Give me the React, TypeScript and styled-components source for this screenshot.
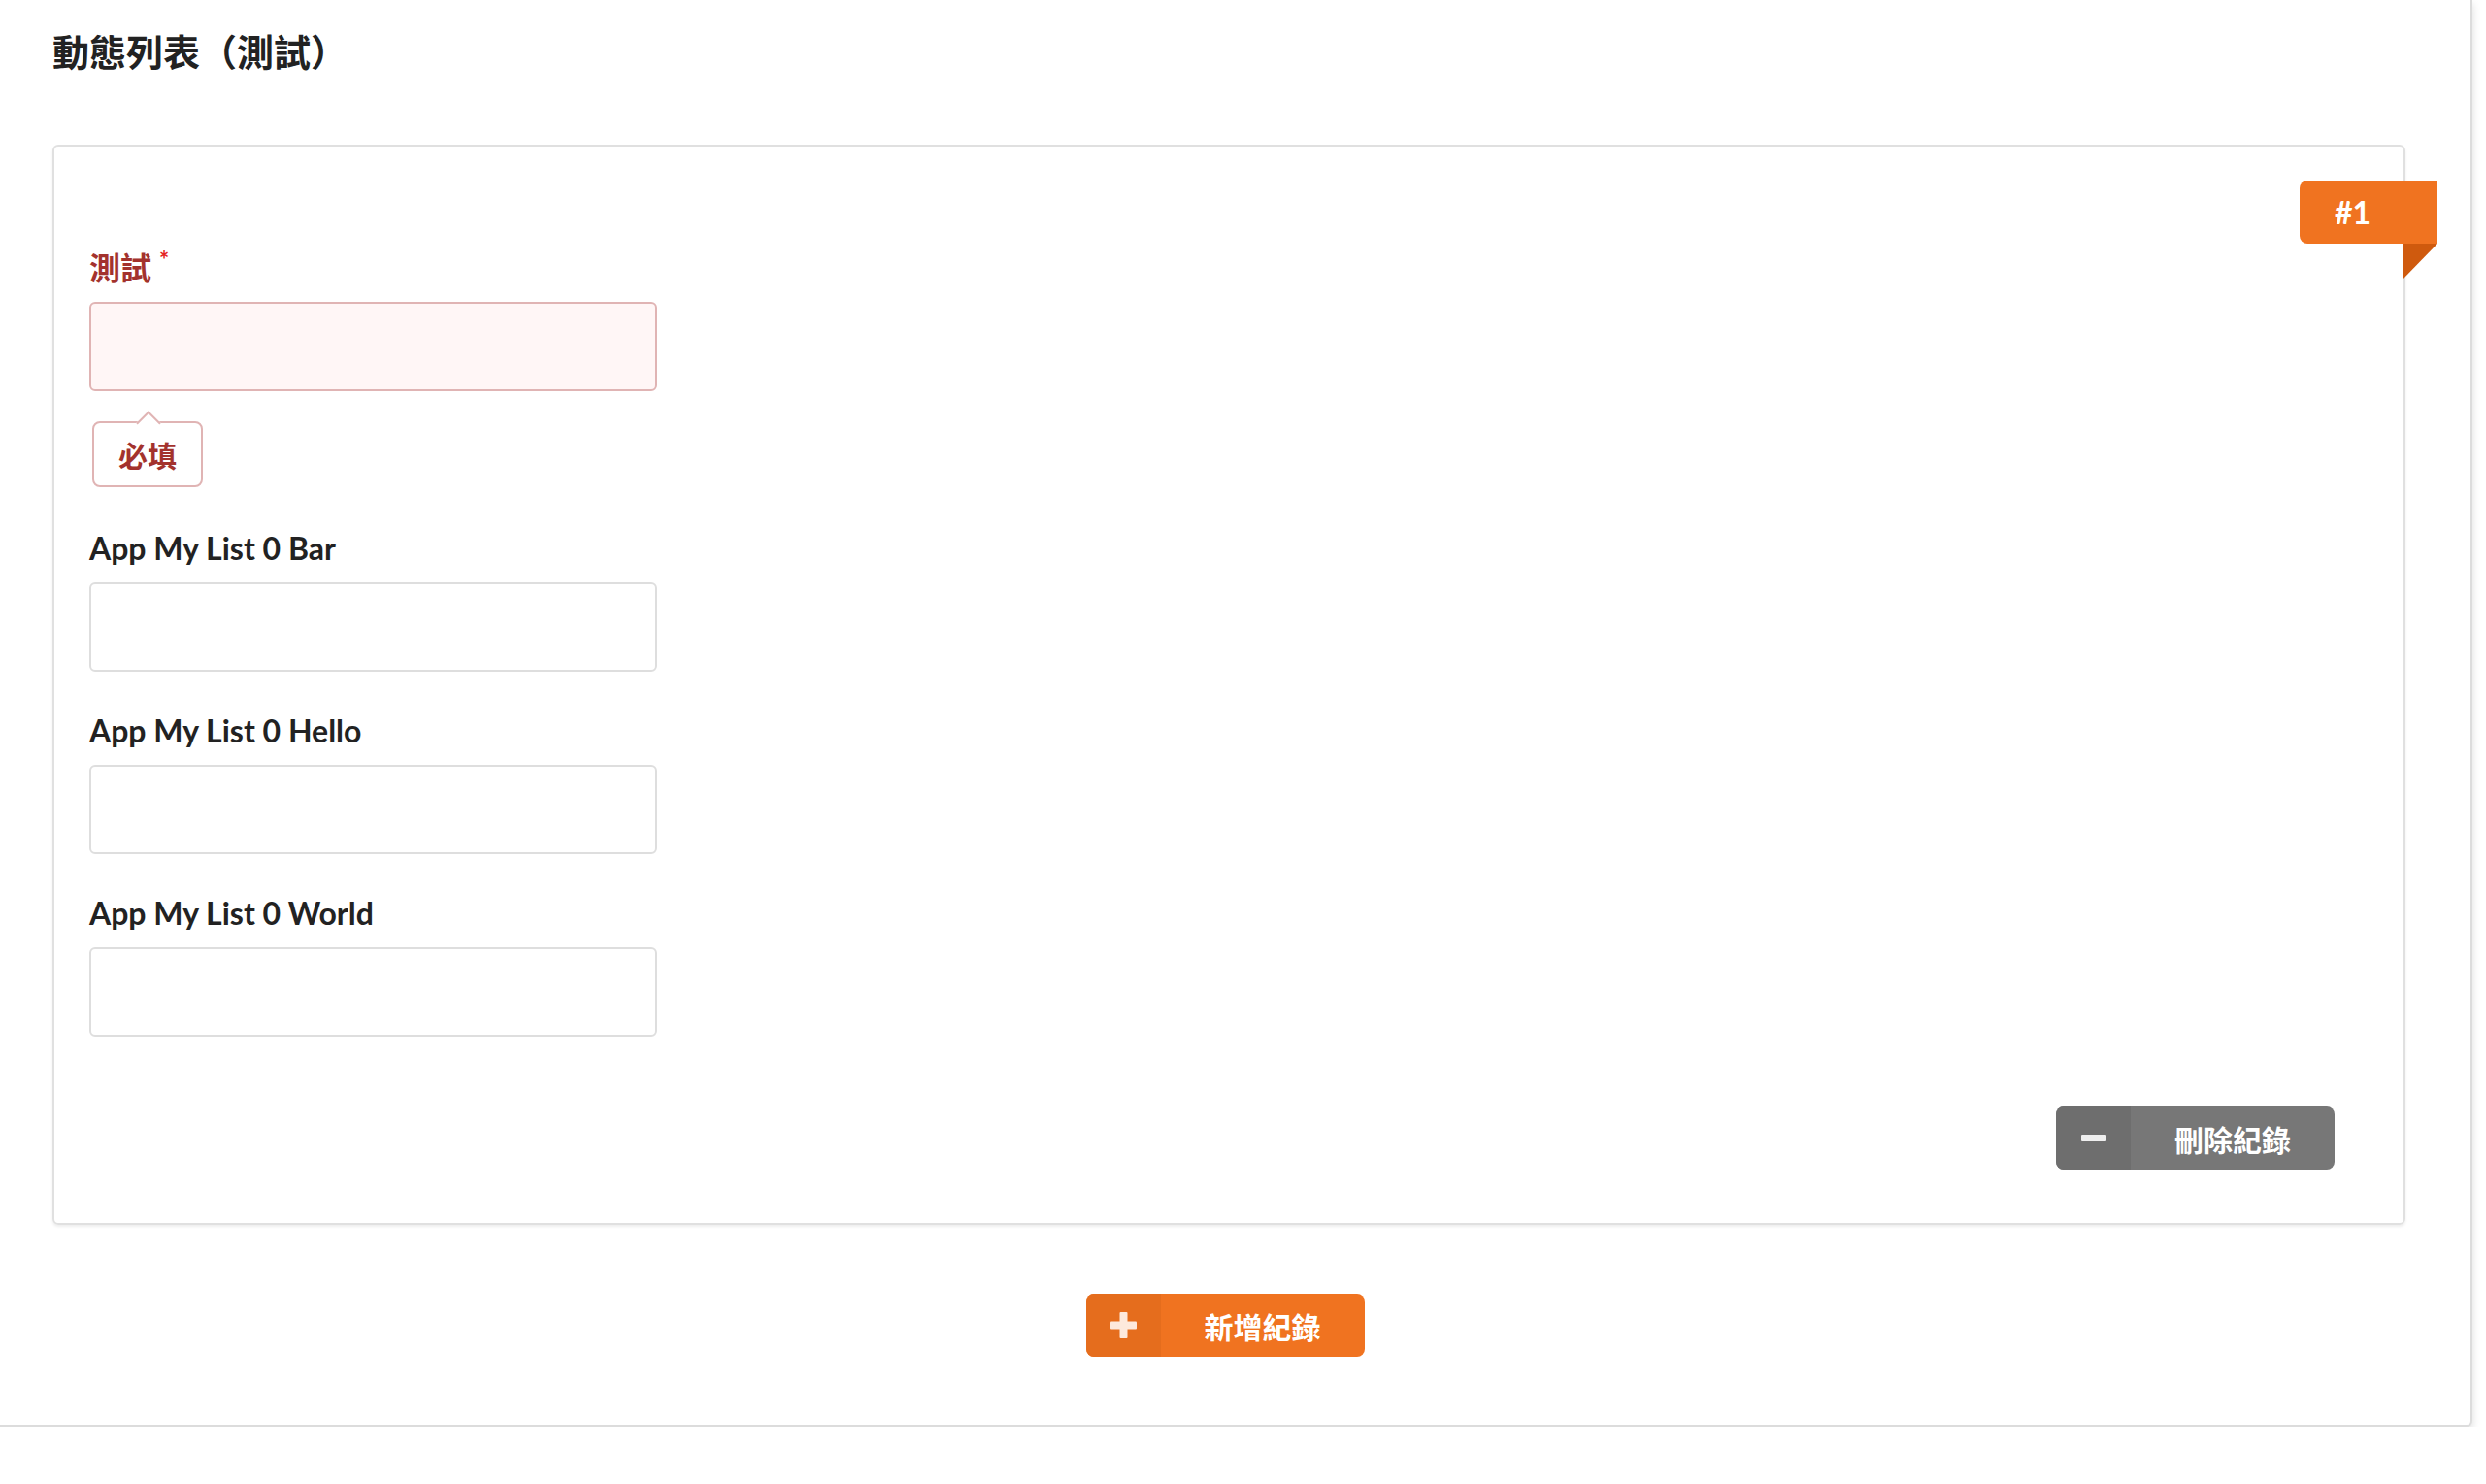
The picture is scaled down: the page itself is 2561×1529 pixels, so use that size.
import React from "react";
import styled, { createGlobalStyle } from "styled-components";

const GlobalStyle = createGlobalStyle`
  html, body { margin: 0; padding: 0; background: #fff; }
  body { font-family: Lato, "Noto Sans CJK TC", sans-serif; color: #222; overflow: hidden; }
  * { box-sizing: border-box; }
`;

const Panel = styled.div`
  width: 2551px;
  margin-left: -4px;
  padding: 30px 0 70px 58px;
  background: #fff;
  border: 2px solid #dcdcdc;
  border-top: none;
  border-left: none;
  border-bottom-right-radius: 6px;
  box-shadow: 0 4px 8px rgba(0, 0, 0, 0.14);
`;

const Title = styled.h2`
  margin: 0;
  font-size: 38px;
  line-height: 46px;
  font-weight: 700;
  color: #222;
`;

const Card = styled.div`
  position: relative;
  width: 2424px;
  margin-top: 73px;
  padding: 105px 71px 55px 36px;
  border: 2px solid #e0e0e0;
  border-radius: 6px;
  box-shadow: 0 2px 3px rgba(0, 0, 0, 0.07);
`;

const Badge = styled.div`
  position: absolute;
  top: 35px;
  right: -35px;
  width: 142px;
  height: 65px;
  padding-left: 36px;
  display: flex;
  align-items: center;
  background: #f07320;
  color: #fff;
  font-size: 32px;
  font-weight: 700;
  border-radius: 8px 0 0 8px;

  &::after {
    content: "";
    position: absolute;
    right: 0;
    top: 100%;
    width: 0;
    height: 0;
    border-top: 36px solid #cf5a0e;
    border-right: 35px solid transparent;
  }
`;

const Field = styled.div`
  display: flex;
  flex-direction: column;
  align-items: flex-start;
  margin-bottom: 41px;
`;

const Label = styled.label<{ $error?: boolean }>`
  display: block;
  height: 40px;
  line-height: 40px;
  font-size: 32px;
  font-weight: 700;
  color: ${(p) => (p.$error ? "#a3322d" : "#222")};
  margin-bottom: 15px;
`;

const Star = styled.span`
  color: #e52222;
  font-size: 24px;
  vertical-align: top;
  position: relative;
  top: -8px;
  margin-left: 8px;
`;

const Input = styled.input<{ $error?: boolean }>`
  display: block;
  width: 585px;
  height: 92px;
  border: 2px solid ${(p) => (p.$error ? "#e0b4b4" : "#dedede")};
  background: ${(p) => (p.$error ? "#fff6f6" : "#fff")};
  border-radius: 6px;
  outline: none;
  font-size: 28px;
  padding: 0 20px;
`;

const Tip = styled.div`
  position: relative;
  margin-top: 31px;
  margin-left: 3px;
  width: 114px;
  height: 68px;
  border: 2px solid #e0b4b4;
  border-radius: 8px;
  background: #fff;
  display: flex;
  align-items: center;
  justify-content: center;
  color: #a3322d;
  font-size: 30px;
  font-weight: 700;
  margin-bottom: 2px;

  &::before {
    content: "";
    position: absolute;
    left: 50%;
    top: -9px;
    width: 16px;
    height: 16px;
    margin-left: -8px;
    background: #fff;
    border-top: 2px solid #e0b4b4;
    border-left: 2px solid #e0b4b4;
    transform: rotate(45deg);
  }
`;

const RightRow = styled.div`
  display: flex;
  justify-content: flex-end;
  margin-top: 72px;
`;

const CenterRow = styled.div`
  width: 2424px;
  display: flex;
  justify-content: center;
  margin-top: 71px;
  padding-right: 8px;
`;

const Button = styled.button<{ $tone: "grey" | "orange" }>`
  display: flex;
  align-items: stretch;
  height: 65px;
  padding: 0;
  border: none;
  border-radius: 8px;
  overflow: hidden;
  cursor: pointer;
  font-family: Lato, "Noto Sans CJK TC", sans-serif;
  background: ${(p) => (p.$tone === "grey" ? "#777777" : "#f07320")};
`;

const IconPart = styled.span<{ $tone: "grey" | "orange" }>`
  width: 77px;
  display: flex;
  align-items: center;
  justify-content: center;
  background: ${(p) => (p.$tone === "grey" ? "#6e6e6e" : "#e56d1d")};
`;

const TextPart = styled.span`
  width: 210px;
  display: flex;
  align-items: center;
  justify-content: center;
  color: #fff;
  font-size: 30px;
  font-weight: 700;
`;

const fields = [
  "App My List 0 Bar",
  "App My List 0 Hello",
  "App My List 0 World",
];

export default function App() {
  return (
    <>
      <GlobalStyle />
      <Panel>
        <Title>動態列表（測試）</Title>
        <Card>
          <Badge>#1</Badge>
          <Field>
            <Label $error>
              測試<Star>*</Star>
            </Label>
            <Input $error />
            <Tip>必填</Tip>
          </Field>
          {fields.map((f) => (
            <Field key={f}>
              <Label>{f}</Label>
              <Input />
            </Field>
          ))}
          <RightRow>
            <Button $tone="grey">
              <IconPart $tone="grey">
                <svg width="26" height="7" viewBox="0 0 26 7">
                  <rect x="0" y="0" width="26" height="7" rx="1" fill="#eeeeee" />
                </svg>
              </IconPart>
              <TextPart>刪除紀錄</TextPart>
            </Button>
          </RightRow>
        </Card>
        <CenterRow>
          <Button $tone="orange">
            <IconPart $tone="orange">
              <svg width="27" height="27" viewBox="0 0 27 27">
                <rect x="9.5" y="0" width="8" height="27" rx="1" fill="#fde9dc" />
                <rect x="0" y="9.5" width="27" height="8" rx="1" fill="#fde9dc" />
              </svg>
            </IconPart>
            <TextPart>新增紀錄</TextPart>
          </Button>
        </CenterRow>
      </Panel>
    </>
  );
}
